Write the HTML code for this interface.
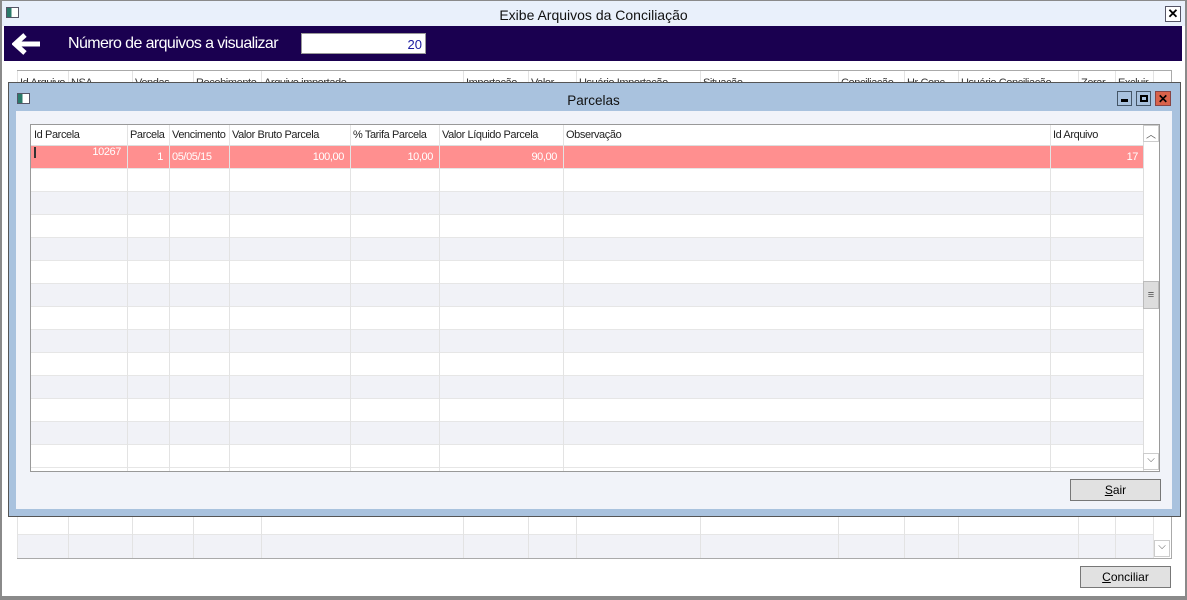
<!DOCTYPE html>
<html><head><meta charset="utf-8"><style>
*{margin:0;padding:0;box-sizing:border-box}
body{width:1187px;height:600px;overflow:hidden;background:#fff;font-family:"Liberation Sans",sans-serif;position:relative}
.a{position:absolute}
.t{font-size:11px;color:#222;white-space:nowrap;letter-spacing:-0.4px}
</style></head><body>
<div class="a" style="left:0;top:0;width:1187px;height:600px;border:2px solid #8a8a8a;border-bottom:4px solid #8a8a8a;border-top:1px solid #8a8a8a"></div>
<div class="a" style="left:2px;top:1px;width:1183px;height:25px;background:#e9f0fb"></div>
<div class="a" style="left:6px;top:7px;width:13px;height:11px;border:1px solid #556;background:linear-gradient(90deg,#2a7a6a 40%,#fff 40%)"></div>
<div class="a" style="left:0;top:7px;width:1187px;text-align:center;font-size:14px;color:#111">Exibe Arquivos da Conciliação</div>
<div class="a" style="left:1165px;top:6px;width:16px;height:16px;border:1px solid #556;background:#fff;font-size:13px;font-weight:bold;text-align:center;line-height:14px">✕</div>
<div class="a" style="left:4px;top:26px;width:1178px;height:35px;background:#1a0050"></div>
<svg class="a" style="left:12px;top:32px" width="30" height="24" viewBox="0 0 30 24"><path d="M3 12 H28 M13 3 L3 12 L13 21" stroke="#fff" stroke-width="5" fill="none"/></svg>
<div class="a" style="left:68px;top:35px;font-size:16px;color:#fff;letter-spacing:-0.6px">Número de arquivos a visualizar</div>
<div class="a" style="left:301px;top:33px;width:125px;height:21px;background:#fff;border:1px solid #999;color:#1a1aa0;font-size:13px;text-align:right;padding:3px 3px 0 0">20</div>
<div class="a" style="left:17px;top:70px;width:1155px;height:489px;border:1px solid #aaa;background:#fff"></div>
<div class="a" style="left:18px;top:517px;width:1135px;height:18px;background:#fff;border-bottom:1px solid #e6e6e6"></div>
<div class="a" style="left:18px;top:535px;width:1135px;height:23px;background:#f1f2f7"></div>
<div class="a" style="left:1153px;top:71px;width:18px;height:487px;background:#fff;border-left:1px solid #ddd"></div>
<div class="a" style="left:1154px;top:540px;width:16px;height:17px;border:1px solid #ccc;font-size:10px;text-align:center;color:#555">⌵</div>
<div id="bgcols"></div>
<div class="a" style="left:1080px;top:566px;width:91px;height:22px;background:#e1e1e1;border:1px solid #777;font-size:12px;text-align:center;line-height:20px"><u>C</u>onciliar</div>
<div class="a" style="left:8px;top:82px;width:1173px;height:435px;border:1px solid #555;background:#a9c2de"></div>
<div class="a" style="left:16px;top:111px;width:1156px;height:398px;background:#f1f3f9"></div>
<div class="a" style="left:17px;top:93px;width:13px;height:11px;border:1px solid #556;background:linear-gradient(90deg,#2a7a6a 40%,#fff 40%)"></div>
<div class="a" style="left:0;top:93px;width:1187px;text-align:center;font-size:13.5px;color:#111">Parcelas</div>
<div class="a" style="left:1117px;top:91px;width:15px;height:15px;border:1px solid #456;background:#a9c2de"><div class="a" style="left:3px;top:7px;width:7px;height:3px;background:#000"></div></div>
<div class="a" style="left:1136px;top:91px;width:15px;height:15px;border:1px solid #456;background:#a9c2de"><div class="a" style="left:3px;top:3px;width:8px;height:7px;border:2px solid #000"></div></div>
<div class="a" style="left:1155px;top:91px;width:16px;height:15px;border:1px solid #844;background:#d9624a;font-size:12px;font-weight:bold;text-align:center;line-height:14px">✕</div>
<div class="a" style="left:30px;top:124px;width:1130px;height:348px;border:1px solid #999;background:#fff;overflow:hidden" id="pg"></div>
<div class="a" style="left:1143px;top:125px;width:16px;height:346px;background:#fff;border-left:1px solid #ddd"></div>
<div class="a" style="left:1143px;top:125px;width:16px;height:17px;border:1px solid #ccc;font-size:10px;text-align:center;color:#555">︿</div>
<div class="a" style="left:1143px;top:281px;width:16px;height:28px;background:#ddd;border:1px solid #bbb;font-size:11px;text-align:center;line-height:26px;color:#555">≡</div>
<div class="a" style="left:1143px;top:453px;width:16px;height:17px;border:1px solid #ccc;font-size:10px;text-align:center;color:#555">⌵</div>
<div class="a" style="left:1070px;top:479px;width:91px;height:22px;background:#e1e1e1;border:1px solid #777;font-size:12px;text-align:center;line-height:20px"><u>S</u>air</div>
<script>
var bc=[17,68,132,193,261,463,528,576,700,838,904,958,1078,1115,1153],h='';
var bl=["Id Arquivo","NSA","Vendas","Recebimento","Arquivo importado","Importação","Valor","Usuário Importação","Situação","Conciliação","Hr Conc","Usuário Conciliação","Zerar","Excluir"];
for(var i=0;i<bc.length;i++){h+='<div class="a" style="left:'+bc[i]+'px;top:71px;width:1px;height:487px;background:#e3e3e3"></div>';
if(i<bl.length)h+='<div class="a" style="left:'+(bc[i]+3)+'px;top:77px;height:5px;overflow:hidden;width:'+(bc[i+1]-bc[i]-4)+'px"><div class="t" style="color:#333">'+bl[i]+'</div></div>';}
document.getElementById('bgcols').innerHTML=h;
var pc=[0,96,138,198,319,408,532,1019,1113],pl=["Id Parcela","Parcela","Vencimento","Valor Bruto Parcela","% Tarifa Parcela","Valor Líquido Parcela","Observação","Id Arquivo"];
var g='<div class="a" style="left:0;top:0;width:1113px;height:21px;background:#fff;border-bottom:1px solid #ddd"></div>';
for(var r=0;r<14;r++){var y=21+r*23;g+='<div class="a" style="left:0;top:'+y+'px;width:1113px;height:23px;background:'+(r==0?'#ff8f8f':(r%2?'#fff':'#f1f2f7'))+';border-bottom:1px solid #e6e6e6"></div>';}
for(var i=1;i<pc.length;i++)g+='<div class="a" style="left:'+pc[i]+'px;top:'+(i>0?0:0)+'px;width:1px;height:348px;background:#e3e3e3"></div>';
for(var i=0;i<pl.length;i++)g+='<div class="a t" style="left:'+(pc[i]+3)+'px;top:4px">'+pl[i]+'</div>';
var vals=["10267","1","05/05/15","100,00","10,00","90,00","","17"];
for(var i=0;i<vals.length;i++){if(i==2){g+='<div class="a t" style="left:'+(pc[i]+3)+'px;top:26px;color:#fff">'+vals[i]+'</div>';continue;}
var tp=i==0?21:26;g+='<div class="a t" style="left:'+pc[i]+'px;top:'+tp+'px;width:'+(pc[i+1]-pc[i]-6)+'px;text-align:right;color:#fff">'+vals[i]+'</div>';}
g+='<div class="a" style="left:3px;top:22px;width:2px;height:11px;background:#333"></div>';
document.getElementById('pg').innerHTML=g;
</script>
</body></html>
